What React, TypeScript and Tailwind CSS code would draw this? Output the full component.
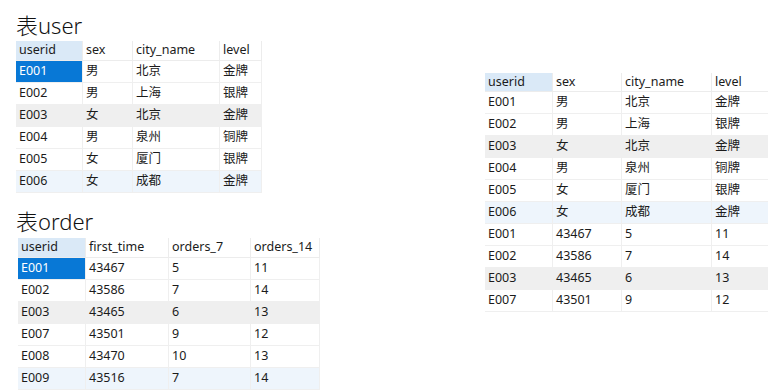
import React from "react";

type Row = { cells: string[]; tone?: "gray" | "blue"; selected?: boolean };

const userCols = ["userid", "sex", "city_name", "level"];
const userRows: Row[] = [
  { cells: ["E001", "男", "北京", "金牌"], selected: true },
  { cells: ["E002", "男", "上海", "银牌"] },
  { cells: ["E003", "女", "北京", "金牌"], tone: "gray" },
  { cells: ["E004", "男", "泉州", "铜牌"] },
  { cells: ["E005", "女", "厦门", "银牌"] },
  { cells: ["E006", "女", "成都", "金牌"], tone: "blue" },
];

const orderCols = ["userid", "first_time", "orders_7", "orders_14"];
const orderRows: Row[] = [
  { cells: ["E001", "43467", "5", "11"], selected: true },
  { cells: ["E002", "43586", "7", "14"] },
  { cells: ["E003", "43465", "6", "13"], tone: "gray" },
  { cells: ["E007", "43501", "9", "12"] },
  { cells: ["E008", "43470", "10", "13"] },
  { cells: ["E009", "43516", "7", "14"], tone: "blue" },
];

const unionRows: Row[] = [
  { cells: ["E001", "男", "北京", "金牌"] },
  { cells: ["E002", "男", "上海", "银牌"] },
  { cells: ["E003", "女", "北京", "金牌"], tone: "gray" },
  { cells: ["E004", "男", "泉州", "铜牌"] },
  { cells: ["E005", "女", "厦门", "银牌"] },
  { cells: ["E006", "女", "成都", "金牌"], tone: "blue" },
  { cells: ["E001", "43467", "5", "11"] },
  { cells: ["E002", "43586", "7", "14"] },
  { cells: ["E003", "43465", "6", "13"], tone: "gray" },
  { cells: ["E007", "43501", "9", "12"] },
];

function Table({
  cols,
  rows,
  widths,
  headerH,
}: {
  cols: string[];
  rows: Row[];
  widths: number[];
  headerH: string;
}) {
  return (
    <div className="self-start w-fit flex flex-col text-[12.5px] text-[#1b1b1b]">
      <div className={`flex ${headerH}`}>
        {cols.map((c, i) => (
          <div
            key={c}
            style={{ width: widths[i] }}
            className={`shrink-0 flex items-center pl-[3px] border-r border-b border-[#ececec] ${
              i === 0 ? "bg-[#dae9f7]" : "bg-white"
            }`}
          >
            {c}
          </div>
        ))}
      </div>
      {rows.map((r, ri) => (
        <div
          key={ri}
          className={`flex h-[22px] ${
            r.tone === "gray"
              ? "bg-[#efefef]"
              : r.tone === "blue"
              ? "bg-[#eef5fc]"
              : "bg-white"
          }`}
        >
          {r.cells.map((c, i) => (
            <div
              key={i}
              style={{ width: widths[i] }}
              className={`shrink-0 flex items-center pl-[3px] border-r border-b border-[#efefef] ${
                r.selected && i === 0 ? "bg-[#0878d6] text-white" : ""
              }`}
            >
              {c}
            </div>
          ))}
        </div>
      ))}
    </div>
  );
}

export default function App() {
  return (
    <div
      className="w-[768px] h-[390px] overflow-hidden bg-white flex"
      style={{ fontFamily: '"Noto Sans", "Noto Sans CJK SC", sans-serif' }}
    >
      <div className="w-[485px] shrink-0 pl-4 flex flex-col">
        <div className="h-[42px] pt-[11px] text-[22px] leading-[28px] font-light text-[#111]">
          表user
        </div>
        <Table cols={userCols} rows={userRows} widths={[67, 50, 87, 42]} headerH="h-[20px]" />
        <div className="h-[46px] pt-[14px] text-[22px] leading-[28px] font-light text-[#111]">
          表order
        </div>
        <div className="pl-[2px] flex">
          <Table cols={orderCols} rows={orderRows} widths={[68, 83, 82, 69]} headerH="h-[20px]" />
        </div>
      </div>
      <div className="flex-1 pt-[73px] overflow-hidden flex">
        <Table cols={userCols} rows={unionRows} widths={[68, 69, 90, 70]} headerH="h-[19px]" />
      </div>
    </div>
  );
}
